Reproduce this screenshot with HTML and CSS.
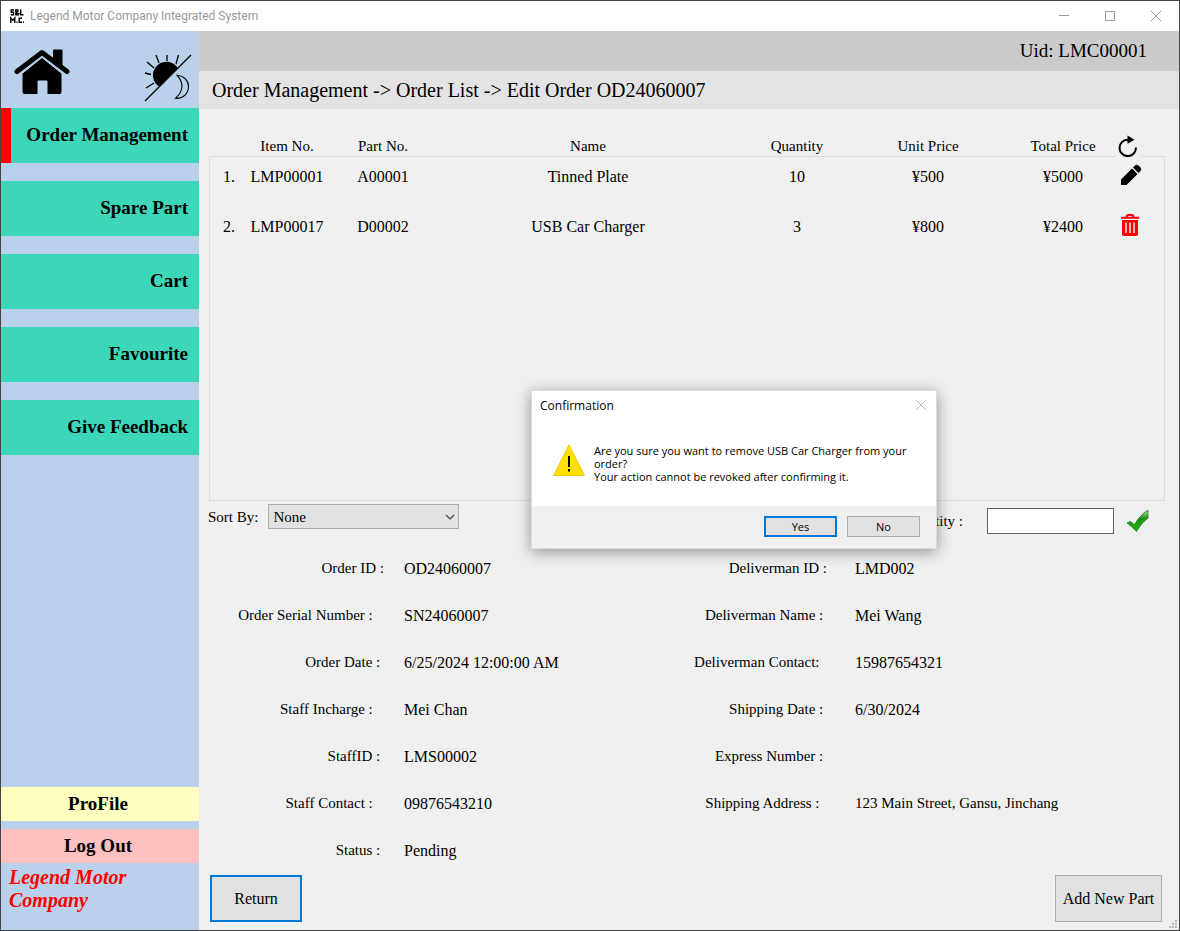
FILE: index.html
```html
<!DOCTYPE html>
<html lang="en">
<head>
<meta charset="utf-8">
<title>Legend Motor Company Integrated System</title>
<link rel="stylesheet" href="styles.css">
</head>
<body>
<div class="window">
  <header class="titlebar">
    <svg class="app-icon" width="14" height="15" viewBox="0 0 14 15" fill="none" stroke="#000" stroke-width="1.4" aria-hidden="true">
      <path d="M4 1H1.2v2.3h2.3v2.4H.7M9 6 5.8 2.6V1h2v1.4L5.8 4v1.7h2L9.3 4M10.7.3v5.4H13.500"/>
      <path d="M.8 14V9l2 2.500L4.800 9v5M6.500 13.300h1M12 9.200H9.200v4.100H12M13 13.300h1"/>
    </svg>
    <span class="titlebar-text">Legend Motor Company Integrated System</span>
    <div class="window-buttons">
      <button type="button" aria-label="Minimize"><svg width="12" height="12" viewBox="0 0 12 12"><path d="M1 5.500h10"/></svg></button>
      <button type="button" aria-label="Maximize"><svg width="12" height="12" viewBox="0 0 12 12"><path d="M1.500 1.500h9v9h-9z"/></svg></button>
      <button type="button" aria-label="Close"><svg width="12" height="12" viewBox="0 0 12 12"><path d="m1 1 10 10M11 1 1 11"/></svg></button>
    </div>
  </header>

  <div class="layout">
    <aside class="sidebar">
      <div class="sidebar-tools">
        <button type="button" class="icon-button" aria-label="Home">
          <svg width="56" height="46" viewBox="0 0 56 46">
            <path d="M39 10V1.500Q39 .5 40 .5h7.500q1 0 1 1V18z"/>
            <path d="M3 22.500 28 3.500l25 19" fill="none" stroke="#000" stroke-width="5" stroke-linecap="round" stroke-linejoin="round"/>
            <path d="M8 24.500 28 8.500l20 16V43q0 2.500-2.500 2.500H33V32h-9v13.500H10.500Q8 45.500 8 43z" stroke="#b9d1ea" stroke-width="1"/>
          </svg>
        </button>
        <button type="button" class="icon-button" aria-label="Toggle theme">
          <svg width="48" height="48" viewBox="0 0 48 48" fill="none" stroke="#000" stroke-width="1.300">
            <path d="M1 47 47 1"/>
            <path d="M15.300 32.700A13.500 13.500 0 1 1 33.900 14.100z" fill="#000" stroke="none"/>
            <path d="M12 1l3 8M23 1v6M34.500 1 32 10M3 8l7 6M1 19l6 1.500M2 34l8-5"/>
            <path d="M33 21.300c7 7 6.500 16-1.500 23 8 .5 13-5 13-12 0-5.500-4.500-10.500-11.500-11z" stroke-width="1.100"/>
          </svg>
        </button>
      </div>
      <nav class="nav">
        <button type="button" class="nav-item nav-item-active">Order Management</button>
        <button type="button" class="nav-item">Spare Part</button>
        <button type="button" class="nav-item">Cart</button>
        <button type="button" class="nav-item">Favourite</button>
        <button type="button" class="nav-item">Give Feedback</button>
      </nav>
      <div class="account">
        <button type="button" class="account-button profile">ProFile</button>
        <button type="button" class="account-button logout">Log Out</button>
      </div>
      <p class="brand">Legend Motor<br>Company</p>
    </aside>

    <main class="main">
      <div class="userbar">Uid: LMC00001</div>
      <h1 class="breadcrumb">Order Management -&gt; Order List -&gt; Edit Order OD24060007</h1>

      <div class="content">
        <section class="items">
          <table class="items-table">
            <thead>
              <tr>
                <th class="col-index"></th>
                <th class="col-item">Item No.</th>
                <th class="col-part">Part No.</th>
                <th>Name</th>
                <th class="col-quantity">Quantity</th>
                <th class="col-unit">Unit Price</th>
                <th class="col-total">Total Price</th>
                <th class="col-action">
                  <button type="button" class="icon-button refresh" aria-label="Refresh">
                    <svg width="20" height="22" viewBox="0 0 20 22"><path d="M11 4.700H9.700A8.200 8.200 0 1 0 17.900 12.500" fill="none" stroke="#000" stroke-width="2"/><path d="M9.500.5 16.500 4.700 9.500 8.700z"/></svg>
                  </button>
                </th>
              </tr>
            </thead>
            <tbody>
              <tr>
                <td class="col-index">1.</td><td>LMP00001</td><td>A00001</td><td>Tinned Plate</td><td>10</td><td>¥500</td><td>¥5000</td>
                <td class="col-action">
                  <button type="button" class="icon-button" aria-label="Edit item">
                    <svg width="22" height="22" viewBox="0 0 22 22"><path d="M1 15.500 12 4.500l5.500 5.500L6.500 21H1zM13 3.500l2-2q1.500-1.500 3.500 0l2 2q1.500 2 0 3.500l-2 2z"/></svg>
                  </button>
                </td>
              </tr>
              <tr>
                <td class="col-index">2.</td><td>LMP00017</td><td>D00002</td><td>USB Car Charger</td><td>3</td><td>¥800</td><td>¥2400</td>
                <td class="col-action">
                  <button type="button" class="icon-button" aria-label="Remove item">
                    <svg width="20" height="22" viewBox="0 0 20 22" fill="none"><path d="M1 3.800h18M6.500 3.500Q6.500 1 8 1h4q1.500 0 1.500 2.500" stroke="#f00" stroke-width="2"/><path d="M2 6h16v14q0 2-2 2H4q-2 0-2-2z" fill="#f00"/><path d="M6 8.500v10.500M10 8.500v10.500M14 8.500v10.500" stroke="#f0f0f0" stroke-width="1.500"/></svg>
                  </button>
                </td>
              </tr>
            </tbody>
          </table>
        </section>

        <div class="controls">
          <div class="sort">
            <label for="sort">Sort By:</label>
            <div class="select-wrap">
              <select id="sort"><option>None</option></select>
              <svg class="chevron" width="10" height="6" viewBox="0 0 10 6" aria-hidden="true"><path d="m1 1 4 4 4-4" fill="none" stroke="#444" stroke-width="1.200"/></svg>
            </div>
          </div>
          <div class="quantity">
            <label for="quantity">Quantity :</label>
            <input id="quantity" type="text">
            <button type="button" class="icon-button" aria-label="Apply quantity">
              <svg width="24" height="24" viewBox="0 0 24 24"><defs><linearGradient id="tick" x1="0" y1="0" x2="0" y2="1"><stop offset="0" stop-color="#b5e3ae"/><stop offset=".4" stop-color="#1f8d16"/><stop offset="1" stop-color="#1cb80c"/></linearGradient></defs><path d="M1 14 4 12.500 8.500 15.500Q14 6 22 1v8Q16 13 10.500 22.500 6 17.500 1 14z" fill="url(#tick)" stroke="#237a20" stroke-width=".8"/></svg>
            </button>
          </div>
        </div>

        <div class="details">
          <dl class="detail-list">
            <dt>Order ID :</dt><dd>OD24060007</dd>
            <dt>Order Serial Number :&nbsp;&nbsp;&nbsp;</dt><dd>SN24060007</dd>
            <dt>Order Date :&nbsp;</dt><dd>6/25/2024 12:00:00 AM</dd>
            <dt>Staff Incharge :&nbsp;&nbsp;&nbsp;</dt><dd>Mei Chan</dd>
            <dt>StaffID :&nbsp;</dt><dd>LMS00002</dd>
            <dt>Staff Contact :&nbsp;&nbsp;&nbsp;</dt><dd>09876543210</dd>
            <dt>Status :&nbsp;</dt><dd>Pending</dd>
          </dl>
          <dl class="detail-list delivery">
            <dt>Deliverman ID :</dt><dd>LMD002</dd>
            <dt>Deliverman Name :&nbsp;</dt><dd>Mei Wang</dd>
            <dt>Deliverman Contact:&nbsp;&nbsp;</dt><dd>15987654321</dd>
            <dt>Shipping Date :&nbsp;</dt><dd>6/30/2024</dd>
            <dt>Express Number :&nbsp;</dt><dd></dd>
            <dt>Shipping Address :&nbsp;&nbsp;</dt><dd class="address">123 Main Street, Gansu, Jinchang</dd>
          </dl>
        </div>

        <div class="actions">
          <button type="button" class="button button-return">Return</button>
          <button type="button" class="button button-add">Add New Part</button>
        </div>
      </div>
      <svg class="grip" width="8" height="8" viewBox="0 0 8 8" fill="#b8b8b8" aria-hidden="true"><path d="M6 0h2v2H6zM3 3h2v2H3zM6 3h2v2H6zM0 6h2v2H0zM3 6h2v2H3zM6 6h2v2H6z"/></svg>
    </main>
  </div>

  <div class="dialog" role="alertdialog" aria-labelledby="dialog-title" aria-describedby="dialog-message">
    <div class="dialog-title">
      <span id="dialog-title">Confirmation</span>
      <button type="button" class="icon-button" aria-label="Close dialog"><svg width="12" height="12" viewBox="0 0 12 12"><path d="m1 1 10 10M11 1 1 11" stroke="#bbb"/></svg></button>
    </div>
    <div class="dialog-body">
      <svg width="32" height="32" viewBox="0 0 32 32" aria-hidden="true"><path d="M16 .8 31.500 31.500H.5z" fill="#fde100" stroke="#fcc21b"/><path d="M15 12h2v11h-2zM15 25h2v2.500h-2z"/></svg>
      <p id="dialog-message">Are you sure you want to remove USB Car Charger from your order?<br>Your action cannot be revoked after confirming it.</p>
    </div>
    <div class="dialog-footer">
      <button type="button" class="dialog-button dialog-button-default">Yes</button>
      <button type="button" class="dialog-button">No</button>
    </div>
  </div>
</div>
</body>
</html>
```
FILE: styles.css
```css
* {
  box-sizing: border-box;
}

body {
  margin: 0;
  font-family: "Liberation Serif", "Times New Roman", serif;
  font-size: 16px;
  line-height: 20px;
  color: #000;
}

button,
input,
select {
  font: inherit;
  color: inherit;
  border-radius: 0;
}

.window {
  position: relative;
  display: flex;
  flex-direction: column;
  min-height: 100vh;
  border: 1px solid #444;
  background: #f0f0f0;
}

.titlebar {
  display: flex;
  align-items: center;
  height: 30px;
  padding-left: 9px;
  background: #fff;
  color: #999;
  font-family: Roboto, "Noto Sans", sans-serif;
  font-size: 12px;
}

.titlebar-text {
  margin-left: 6px;
}

.window-buttons {
  display: flex;
  margin-left: auto;
}

.window-buttons button {
  display: flex;
  align-items: center;
  justify-content: center;
  width: 46px;
  height: 30px;
  padding: 0;
  border: 0;
  background: none;
}

.window-buttons path {
  fill: none;
  stroke: #999;
}

.icon-button {
  display: block;
  padding: 0;
  border: 0;
  background: none;
}

.icon-button svg {
  display: block;
}

.layout {
  display: grid;
  grid-template-columns: 198px 1fr;
  flex: 1;
}

.sidebar {
  display: flex;
  flex-direction: column;
  background: #b9d1ea;
}

.sidebar-tools {
  display: flex;
  justify-content: space-between;
  align-items: flex-start;
  height: 77px;
  padding: 18px 7px 0 13px;
}

.sidebar-tools .icon-button + .icon-button {
  padding-top: 5px;
}

.nav {
  display: grid;
  gap: 18px;
}

.nav-item {
  height: 55px;
  padding: 0 11px 2px 0;
  border: 0;
  background: #3cd7b9;
  font-size: 19px;
  font-weight: bold;
  text-align: right;
}

.nav-item-active {
  border-left: 10px solid #f00;
}

.account {
  display: grid;
  gap: 8px;
  margin-top: auto;
}

.account-button {
  height: 34px;
  padding: 0 4px 0 0;
  border: 0;
  font-size: 19px;
  font-weight: bold;
}

.profile {
  background: #ffffc0;
}

.logout {
  background: #ffc0c0;
}

.brand {
  margin: 0;
  padding: 3px 8px 18px;
  color: #f00;
  font-size: 20px;
  line-height: 23px;
  font-weight: bold;
  font-style: italic;
}

.main {
  position: relative;
  display: flex;
  flex-direction: column;
}

.userbar {
  padding-right: 32px;
  background: #cbcbcb;
  font-size: 19px;
  line-height: 40px;
  text-align: right;
}

.breadcrumb {
  margin: 0;
  padding-left: 13px;
  background: #e3e3e3;
  font-size: 20px;
  line-height: 38px;
  font-weight: normal;
}

.content {
  display: flex;
  flex-direction: column;
  flex: 1;
  padding: 47px 14px 8px 9px;
}

.items {
  flex: 1;
  margin-left: 1px;
  border: 1px solid #dcdcdc;
}

.items-table {
  width: 100%;
  margin-top: -21px;
  table-layout: fixed;
  border-collapse: collapse;
  text-align: center;
}

.items-table th {
  height: 21px;
  padding: 0;
  font-size: 15px;
  font-weight: normal;
  vertical-align: top;
}

.items-table td {
  height: 50px;
  padding: 10px 0 0;
  vertical-align: top;
}

.items-table .col-index {
  width: 26px;
  padding-right: 1px;
  text-align: right;
}

.col-item {
  width: 102px;
}

.col-part {
  width: 90px;
}

.col-quantity {
  width: 98px;
}

.col-unit {
  width: 164px;
}

.col-total {
  width: 106px;
}

.items-table .col-action {
  width: 48px;
  padding-left: 4px;
}

.items-table td.col-action {
  padding-top: 7px;
}

.items-table .refresh {
  margin: -1px 0 -2px -4px;
  padding: 0 3px 1px 2px;
  background: #f0f0f0;
}

.controls {
  display: flex;
  justify-content: space-between;
  align-items: flex-start;
  height: 44px;
  font-size: 15px;
}

.sort {
  display: flex;
  align-items: center;
  gap: 10px;
  padding-top: 3px;
}

.select-wrap {
  position: relative;
}

.select-wrap select {
  display: block;
  width: 191px;
  height: 25px;
  padding: 0 24px 0 4px;
  border: 1px solid #adadad;
  background: #e1e1e1;
  appearance: none;
}

.chevron {
  position: absolute;
  top: 10px;
  right: 4px;
}

.quantity {
  display: flex;
  align-items: center;
  gap: 12px;
  padding: 7px 15px 0 0;
}

.quantity input {
  width: 127px;
  height: 26px;
  margin-left: 12px;
  border: 1px solid #646464;
  background: #fff;
}

.details {
  display: grid;
  grid-template-columns: 452px 1fr;
}

.detail-list {
  display: grid;
  grid-template-columns: 176px 1fr;
  grid-auto-rows: 47px;
  align-content: start;
  column-gap: 20px;
  margin: 0;
  line-height: 47px;
  white-space: nowrap;
}

.delivery {
  grid-template-columns: 167px 1fr;
  column-gap: 28px;
}

.detail-list dt {
  font-size: 15px;
  text-align: right;
}

.detail-list dd {
  margin: 0;
}

.detail-list .address {
  font-size: 15px;
}

.actions {
  display: flex;
  justify-content: space-between;
  padding: 1px 3px 0 2px;
}

.button {
  height: 47px;
  padding: 0;
  border: 1px solid #adadad;
  background: #e1e1e1;
}

.button-return {
  width: 92px;
  border: 2px solid #0078d7;
}

.button-add {
  width: 107px;
}

.grip {
  position: absolute;
  right: 2px;
  bottom: 2px;
}

.dialog {
  position: absolute;
  top: 389px;
  left: 530px;
  width: 406px;
  border: 1px solid #dcdcdc;
  background: #fff;
  box-shadow: 0 3px 14px rgba(0, 0, 0, 0.4);
  font-family: "Open Sans", "Noto Sans", sans-serif;
  font-size: 11px;
  line-height: 13px;
}

.dialog-title {
  display: flex;
  justify-content: space-between;
  align-items: center;
  height: 30px;
  padding: 0 9px 2px 8px;
  font-size: 12px;
}

.dialog-body {
  display: flex;
  gap: 9px;
  height: 85px;
  padding: 23px 20px 0 21px;
}

.dialog-body svg {
  flex: none;
}

.dialog-body p {
  margin: 0;
}

.dialog-footer {
  display: flex;
  justify-content: flex-end;
  gap: 10px;
  padding: 10px 16px 11px;
  background: #f0f0f0;
}

.dialog-button {
  width: 73px;
  height: 21px;
  padding: 0;
  border: 1px solid #adadad;
  background: #e1e1e1;
}

.dialog-button-default {
  border: 2px solid #0078d7;
}
```
